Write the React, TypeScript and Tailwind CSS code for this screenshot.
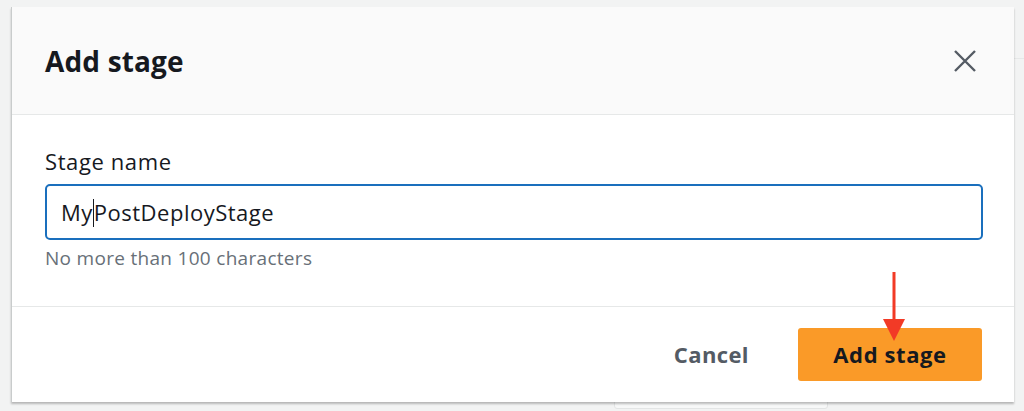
import React from "react";

export default function App() {
  return (
    <div
      className="relative w-[1024px] h-[411px] overflow-hidden bg-[#f2f3f3]"
      style={{ fontFamily: '"Open Sans", "Liberation Sans", sans-serif' }}
    >
      {/* faint background element behind dialog */}
      <div className="absolute left-[614px] top-[380px] w-[214px] h-[29px] rounded-[3px] border border-[#e3e5e5] bg-[#f7f8f8]" />
      <div className="absolute left-[1014px] top-[58px] w-[10px] h-px bg-[#e6e8e8]" />

      <div className="absolute left-[11px] top-[7px] w-[1003px] h-[395px] flex flex-col bg-white border-l border-[#c9cccc] shadow-[0_2px_2px_rgba(0,0,0,0.25)]">
        <div className="h-[108px] flex items-center justify-between pl-[33px] pr-[37px] bg-[#fafafa] border-b border-[#e6e8e8]">
          <h1 className="text-[28px] font-bold text-[#16191f] tracking-[0.15px]">Add stage</h1>
          <svg width="24" height="24" viewBox="0 0 24 24" className="text-[#545b64]">
            <path d="M2 2 L22 22 M22 2 L2 22" stroke="currentColor" strokeWidth="2.4" fill="none" />
          </svg>
        </div>

        <div className="flex-1 flex flex-col pl-[33px] pr-[31px] pt-[31px] border-b border-[#e6e8e8]">
          <label className="text-[22px] leading-[30px] tracking-[0.6px] text-[#16191f]">Stage name</label>
          <div className="mt-[8px] h-[56px] rounded-[5px] border-[2.5px] border-[#1a6fbd] flex items-center pl-[14px]">
            <span className="text-[22px] tracking-[0.5px] text-[#16191f]">
              My
              <span className="inline-block w-px h-[28px] align-middle bg-[#16191f] -mt-[3px]" />
              PostDeployStage
            </span>
          </div>
          <p className="mt-[5px] text-[19px] leading-[26px] tracking-[0.3px] text-[#687078]">No more than 100 characters</p>
        </div>

        <div className="h-[95px] flex items-center justify-end pr-[32px] gap-[49px]">
          <span className="text-[22px] font-bold tracking-[0.4px] text-[#545b64]">Cancel</span>
          <div className="w-[184px] h-[53px] rounded-[3px] bg-[#fa9a28] flex items-center justify-center">
            <span className="text-[22px] font-bold tracking-[0.6px] text-[#16191f]">Add stage</span>
          </div>
        </div>
      </div>

      {/* red annotation arrow */}
      <svg className="absolute left-[880px] top-[272px]" width="28" height="72" viewBox="0 0 28 72">
        <rect x="12.5" y="0" width="3" height="50" fill="#f23a26" />
        <polygon points="3,47 25,47 14,69" fill="#f23a26" />
      </svg>
    </div>
  );
}
